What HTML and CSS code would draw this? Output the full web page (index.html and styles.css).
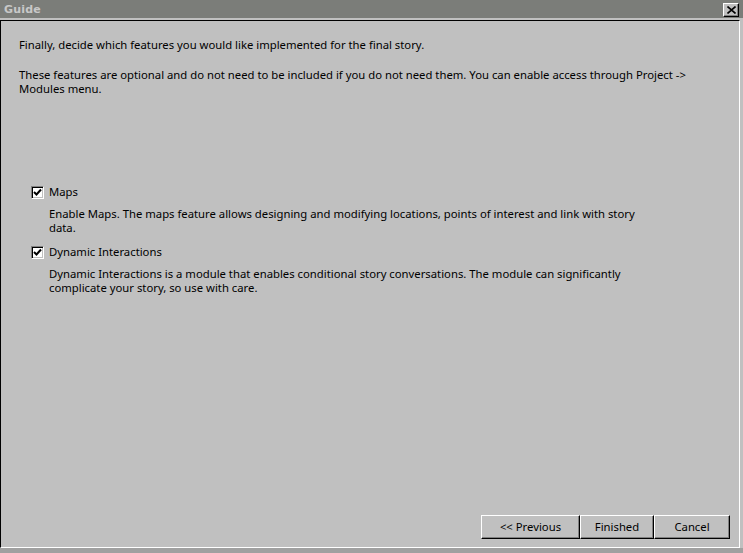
FILE: index.html
```html
<!DOCTYPE html>
<html>
<head>
<meta charset="utf-8">
<link rel="stylesheet" href="styles.css">
</head>
<body>
<div class="window">
  <div class="titlebar">
    <span class="title">Guide</span>
    <span class="close">
      <svg width="9" height="8" viewBox="0 0 9 8"><path d="M0.5 0.5 L8.5 7.5 M8.5 0.5 L0.5 7.5" stroke="#000" stroke-width="1.6" fill="none"/></svg>
    </span>
  </div>
  <div class="sep"></div>
  <div class="panel">
    <p class="intro">Finally, decide which features you would like implemented for the final story.</p>
    <p class="intro2">These features are optional and do not need to be included if you do not need them. You can enable access through Project -&gt; Modules menu.</p>
    <div class="options">
      <div class="option">
        <div class="check-row">
          <span class="checkbox"><svg width="9" height="9" viewBox="0 0 9 9"><path d="M1 4 L3.5 6.5 L8 1.5" stroke="#000" stroke-width="2" fill="none"/></svg></span>
          <span class="label">Maps</span>
        </div>
        <p class="desc">Enable Maps. The maps feature allows designing and modifying locations, points of interest and link with story data.</p>
      </div>
      <div class="option">
        <div class="check-row">
          <span class="checkbox"><svg width="9" height="9" viewBox="0 0 9 9"><path d="M1 4 L3.5 6.5 L8 1.5" stroke="#000" stroke-width="2" fill="none"/></svg></span>
          <span class="label">Dynamic Interactions</span>
        </div>
        <p class="desc">Dynamic Interactions is a module that enables conditional story conversations. The module can significantly complicate your story, so use with care.</p>
      </div>
    </div>
    <div class="footer">
      <button class="btn btn-prev">&lt;&lt; Previous</button>
      <button class="btn btn-fin">Finished</button>
      <button class="btn btn-cancel">Cancel</button>
    </div>
  </div>
  <div class="bottom"></div>
</div>
</body>
</html>
```
FILE: styles.css
```css
html, body {
  margin: 0;
  padding: 0;
  background: #c0c0c0;
}
body {
  width: 743px;
  height: 553px;
  overflow: hidden;
  font-family: "Noto Sans", "Open Sans", sans-serif;
  font-size: 11.3px;
  color: #000;
}
.window {
  width: 743px;
  height: 553px;
  display: flex;
  flex-direction: column;
}
.titlebar {
  height: 18px;
  background: #7b7d79;
  display: flex;
  align-items: center;
  justify-content: space-between;
  padding: 0 4px 0 4px;
  box-sizing: border-box;
}
.title {
  font-family: "DejaVu Sans", sans-serif;
  font-weight: bold;
  font-size: 11px;
  color: #c8c8c8;
  letter-spacing: 0.2px;
}
.close {
  width: 16px;
  height: 14px;
  box-sizing: border-box;
  background: #c0c0c0;
  border-top: 1px solid #fff;
  border-left: 1px solid #fff;
  border-right: 1px solid #000;
  border-bottom: 1px solid #000;
  box-shadow: inset -1px -1px 0 #808080;
  display: flex;
  align-items: center;
  justify-content: center;
  margin-top: 1px;
}
.sep {
  height: 2px;
  background: #c0c0c0;
}
.panel {
  width: 740px;
  height: 528px;
  box-sizing: border-box;
  border-top: 1px solid #000;
  border-left: 1px solid #000;
  border-right: 1px solid #fff;
  border-bottom: 1px solid #fff;
  padding: 17px 9px 8px 18px;
  display: flex;
  flex-direction: column;
}
p {
  margin: 0;
  line-height: 14px;
}
.intro2 {
  margin-top: 16px;
  width: 680px;
}
.options {
  margin-top: 89px;
  padding-left: 12px;
}
.option + .option {
  margin-top: 10px;
}
.check-row {
  display: flex;
  align-items: center;
  height: 14px;
  gap: 5px;
}
.checkbox {
  width: 13px;
  height: 13px;
  box-sizing: border-box;
  background: #fff;
  border-top: 1px solid #808080;
  border-left: 1px solid #808080;
  border-right: 1px solid #fff;
  border-bottom: 1px solid #fff;
  box-shadow: inset 1px 1px 0 #000, inset -1px -1px 0 #c0c0c0;
  display: flex;
  align-items: center;
  justify-content: center;
}
.label {
  line-height: 14px;
}
.desc {
  margin-top: 8px;
  padding-left: 18px;
  width: 590px;
}
.footer {
  margin-top: auto;
  display: flex;
  justify-content: flex-end;
}
.btn {
  height: 24px;
  box-sizing: border-box;
  background: #c0c0c0;
  font-family: "Noto Sans", "Open Sans", sans-serif;
  font-size: 11.3px;
  line-height: 20px;
  color: #000;
  padding: 0 0 1px 0;
  margin: 0;
  border-top: 1px solid #fff;
  border-left: 1px solid #fff;
  border-right: 1px solid #000;
  border-bottom: 1px solid #000;
  box-shadow: inset -1px -1px 0 #808080;
}
.btn-prev { width: 99px; }
.btn-fin { width: 74px; }
.btn-cancel { width: 76px; }
.bottom {
  flex: 1;
  background: #a0a0a0;
}
```
